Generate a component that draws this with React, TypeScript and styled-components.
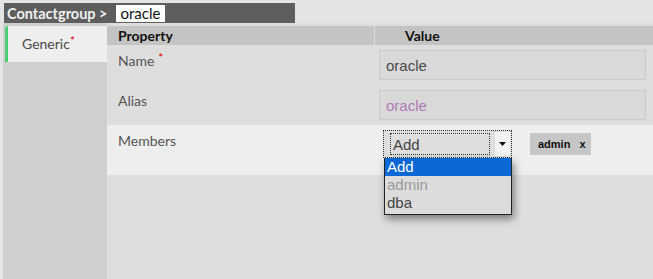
import React from "react"
import styled, { createGlobalStyle } from "styled-components"

const GlobalStyle = createGlobalStyle`
  html, body {
    margin: 0;
    padding: 0;
    background: #e4e4e4;
  }
  body {
    font-family: Lato, "Open Sans", sans-serif;
  }
`

const Page = styled.div`
  width: 653px;
  height: 279px;
  display: flex;
  flex-direction: column;
  background: #e4e4e4;
  overflow: hidden;
`

const TitleBar = styled.div`
  margin: 3px 0 0 4px;
  width: 291px;
  height: 20px;
  background: #5e5e5e;
  display: flex;
  align-items: center;
  padding-left: 3px;
  box-sizing: border-box;
  gap: 8px;
`

const TitleText = styled.span`
  color: #f0f0f0;
  font-weight: 700;
  font-size: 14.5px;
`

const TitleName = styled.span`
  background: #ffffff;
  color: #111;
  font-size: 15px;
  padding: 0 5px;
  height: 17px;
  line-height: 17px;
  margin-top: 1px;
`

const Body = styled.div`
  flex: 1;
  display: flex;
`

const Sidebar = styled.div`
  width: 104px;
  margin-left: 3px;
  background: #cfcfcf;
  padding-top: 3px;
`

const Tab = styled.div`
  margin-left: 2px;
  height: 36px;
  line-height: 36px;
  border-left: 3px solid #4ccf72;
  background: #eeeeee;
  border-top-left-radius: 3px;
  padding-left: 14px;
  font-size: 14px;
  color: #4a4a4a;
`

const Required = styled.span<{ $gap?: number }>`
  color: #e00000;
  font-size: 12px;
  line-height: 0;
  vertical-align: 4px;
  margin-left: ${({ $gap }) => $gap ?? 0}px;
`

const Main = styled.div`
  flex: 1;
  padding-top: 3px;
  background: #dedede;
`

const Grid = styled.div`
  display: grid;
  grid-template-columns: 267px 1fr;
`

const HeaderCell = styled.div<{ $pad: number }>`
  height: 19px;
  background: #c4c4c4;
  font-weight: 700;
  font-size: 14px;
  color: #111;
  display: flex;
  align-items: center;
  padding-left: ${({ $pad }) => $pad}px;
  & + & {
    border-left: 1px solid #dcdcdc;
  }
`

const Label = styled.div<{ $light?: boolean }>`
  background: ${({ $light }) => ($light ? "#eeeeee" : "#dedede")};
  padding: 7px 0 0 11px;
  font-size: 14px;
  color: #555;
`

const ValueCell = styled.div<{ $light?: boolean; $height: number }>`
  background: ${({ $light }) => ($light ? "#eeeeee" : "#dedede")};
  height: ${({ $height }) => $height}px;
  padding: 5px 7px 5px 5px;
  box-sizing: border-box;
  display: flex;
  align-items: flex-start;
`

const TextInput = styled.div<{ $muted?: boolean }>`
  width: 100%;
  height: 30px;
  box-sizing: border-box;
  background: #d9d9d9;
  border: 1px solid #cacaca;
  font-family: "Liberation Sans", Arial, sans-serif;
  font-size: 15px;
  color: ${({ $muted }) => ($muted ? "#b07ab8" : "#4a4a4a")};
  padding-left: 6px;
  display: flex;
  align-items: center;
`

const MemberLine = styled.div`
  display: flex;
  align-items: flex-start;
  gap: 18px;
  padding-left: 4px;
`

const SelectWrap = styled.div`
  position: relative;
`

const SelectBox = styled.div`
  width: 129px;
  height: 28px;
  box-sizing: border-box;
  border: 1px dotted #333;
  background: #dedede;
  display: flex;
  align-items: center;
  padding: 2px 1px 2px 6px;
`

const SelectValue = styled.div`
  width: 100px;
  height: 22px;
  box-sizing: border-box;
  border: 1px dotted #333;
  font-family: "Liberation Sans", Arial, sans-serif;
  font-size: 15px;
  color: #444;
  display: flex;
  align-items: center;
  padding-left: 2px;
`

const ArrowButton = styled.div`
  margin-left: auto;
  width: 15px;
  height: 24px;
  background: #f2f2f2;
  display: flex;
  align-items: center;
  justify-content: center;
`

const Options = styled.div`
  position: absolute;
  top: 28px;
  left: 1px;
  width: 128px;
  box-sizing: border-box;
  background: #dcdcdc;
  border: 1px solid #222;
  border-top: none;
  box-shadow: 2px 4px 8px rgba(0, 0, 0, 0.45);
  font-family: "Liberation Sans", Arial, sans-serif;
  font-size: 15px;
  padding-bottom: 2px;
  z-index: 2;
`

const Option = styled.div<{ $selected?: boolean; $disabled?: boolean }>`
  height: 18px;
  line-height: 18px;
  padding-left: 2px;
  background: ${({ $selected }) => ($selected ? "#0a68d6" : "transparent")};
  color: ${({ $selected, $disabled }) =>
    $selected ? "#ffffff" : $disabled ? "#9a9a9a" : "#444"};
`

const Chip = styled.div`
  margin-top: 3px;
  height: 22px;
  background: #c6c6c6;
  display: flex;
  align-items: center;
  gap: 9px;
  padding: 0 5px 0 8px;
  font-family: "Liberation Sans", Arial, sans-serif;
  font-weight: 700;
  font-size: 11px;
  color: #111;
`

export default function App() {
  return (
    <>
      <GlobalStyle />
      <Page>
        <TitleBar>
          <TitleText>Contactgroup &gt;</TitleText>
          <TitleName>oracle</TitleName>
        </TitleBar>
        <Body>
          <Sidebar>
            <Tab>
              Generic<Required>*</Required>
            </Tab>
          </Sidebar>
          <Main>
            <Grid>
              <HeaderCell $pad={11}>Property</HeaderCell>
              <HeaderCell $pad={30}>Value</HeaderCell>

              <Label>
                Name<Required $gap={4}>*</Required>
              </Label>
              <ValueCell $height={40}>
                <TextInput>oracle</TextInput>
              </ValueCell>

              <Label>Alias</Label>
              <ValueCell $height={40}>
                <TextInput $muted>oracle</TextInput>
              </ValueCell>

              <Label $light>Members</Label>
              <ValueCell $light $height={50}>
                <MemberLine>
                  <SelectWrap>
                    <SelectBox>
                      <SelectValue>Add</SelectValue>
                      <ArrowButton>
                        <svg width="7" height="4" viewBox="0 0 7 4">
                          <path d="M0 0H7L3.5 4Z" fill="#111" />
                        </svg>
                      </ArrowButton>
                    </SelectBox>
                    <Options>
                      <Option $selected>Add</Option>
                      <Option $disabled>admin</Option>
                      <Option>dba</Option>
                    </Options>
                  </SelectWrap>
                  <Chip>
                    <span>admin</span>
                    <span>x</span>
                  </Chip>
                </MemberLine>
              </ValueCell>
            </Grid>
          </Main>
        </Body>
      </Page>
    </>
  )
}
